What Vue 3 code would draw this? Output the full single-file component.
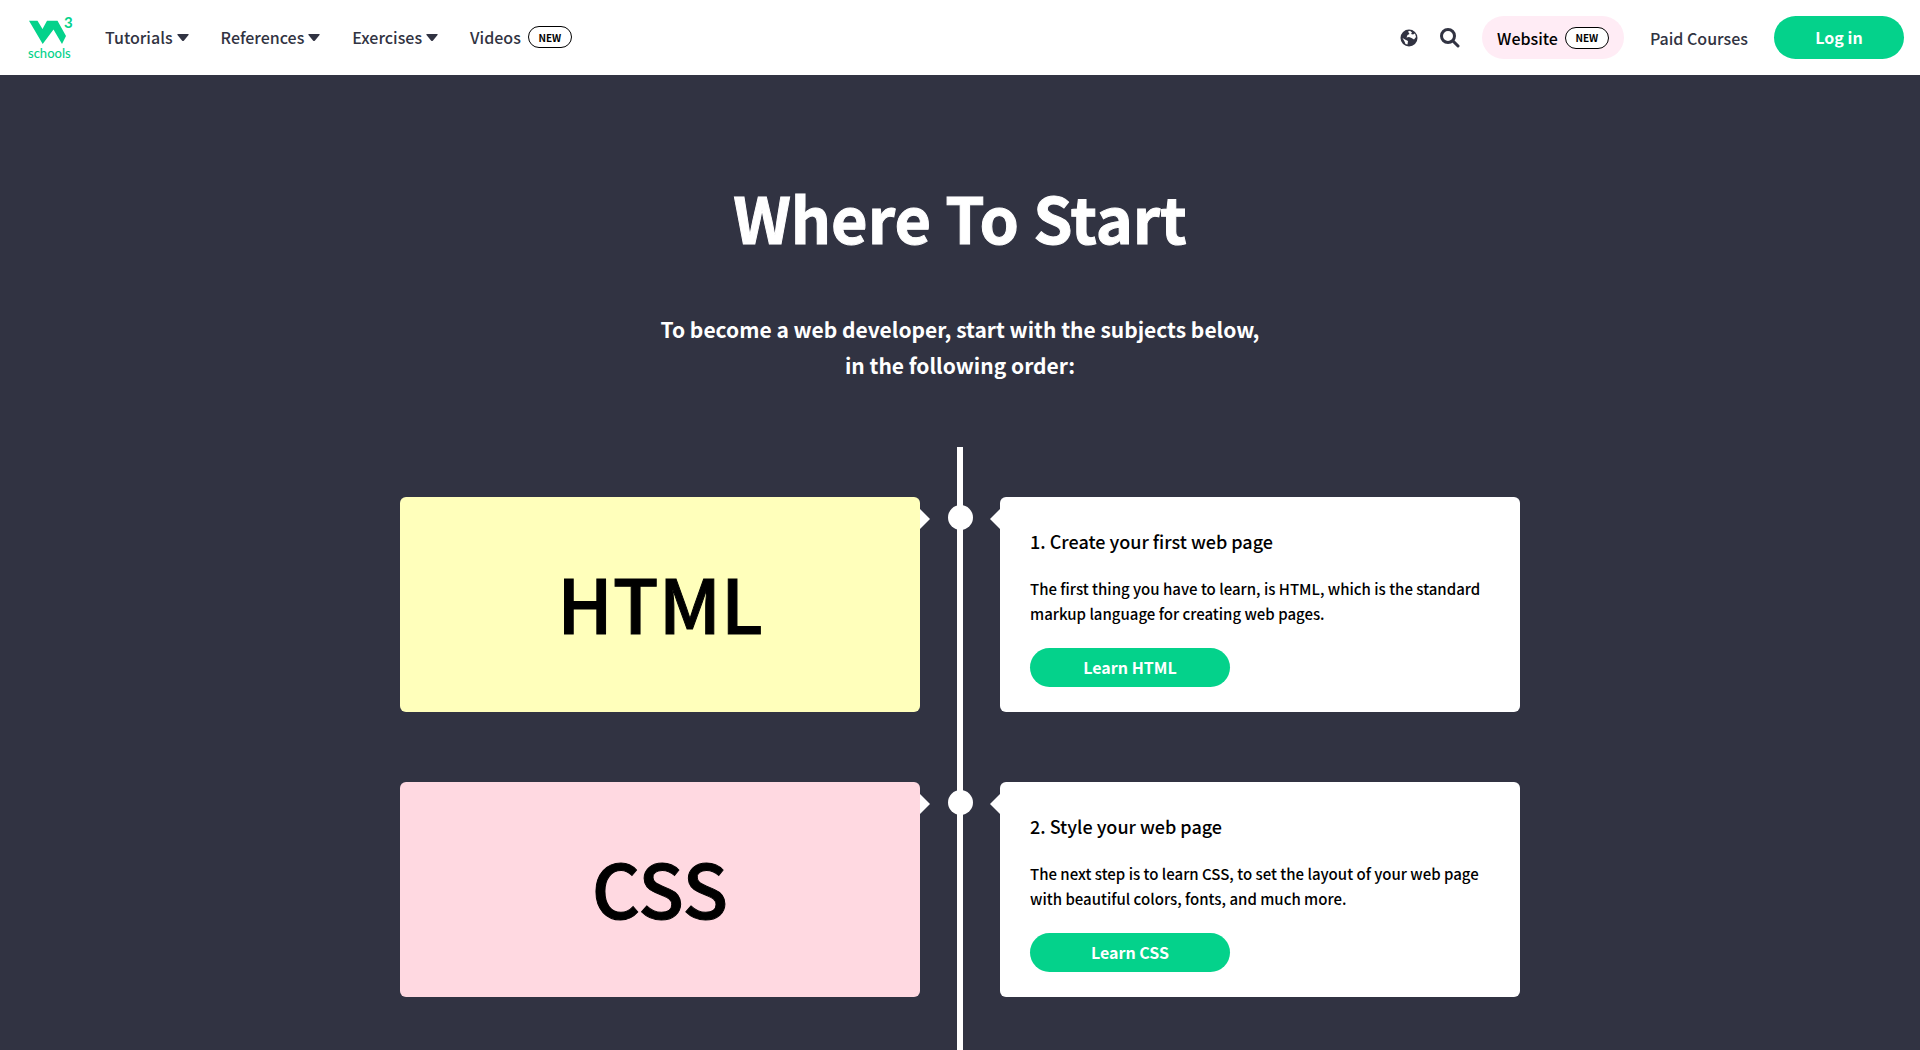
<script setup>
const menus = ['Tutorials', 'References', 'Exercises'];

const steps = [
    {
        name: 'HTML',
        theme: 'yellow',
        title: '1. Create your first web page',
        text: 'The first thing you have to learn, is HTML, which is the standard markup language for creating web pages.',
    },
    {
        name: 'CSS',
        theme: 'pink',
        title: '2. Style your web page',
        text: 'The next step is to learn CSS, to set the layout of your web page with beautiful colors, fonts, and much more.',
    },
];
</script>

<template>
  <div class="page">
    <header class="topbar">
      <a href="#" class="logo" aria-label="W3Schools">
        <svg width="48" height="52" viewBox="0 -4 48 52">
          <path d="M1 4.700H9.500L14.500 13L19 4.700H29.500L38 20L34 28L25.500 13.500L14.700 28Z" fill="#04d28b" />
          <text x="36" y="12" class="logo-three">3</text>
          <text x="0" y="42" class="logo-name">schools</text>
        </svg>
      </a>
      <nav class="menu">
        <button v-for="menu in menus" :key="menu" type="button" class="menu-item">
          {{ menu }}
          <svg width="12" height="7" viewBox="0 0 12 7"><path d="M1 0H11Q12.300 0 11.500 1L7 6.400Q6 7.400 5 6.400L.5 1Q-.3 0 1 0Z" /></svg>
        </button>
        <a href="#" class="menu-item">Videos <span class="badge">NEW</span></a>
      </nav>
      <div class="actions">
        <button type="button" class="icon-button" aria-label="Translate">
          <svg width="18" height="18" viewBox="0 0 18 18">
            <circle cx="9" cy="9" r="8.500" />
            <path d="M8 2.500L10 1.800L12 3.500L11 5L13 5.500L15 4.500L16 8L14 10.500L11.500 9L9 8L6.500 8.500L7.500 6L9.500 5Z" fill="#fff" />
            <path d="M2.500 9L5 10.500L8 12L7.500 15.500L5.500 15L4.500 12.500Z" fill="#fff" />
          </svg>
        </button>
        <button type="button" class="icon-button" aria-label="Search">
          <svg width="20" height="20" viewBox="0 0 20 20">
            <circle cx="8" cy="8" r="6.500" fill="none" stroke="currentColor" stroke-width="3" />
            <path d="M13 13l5 5" stroke="currentColor" stroke-width="3" stroke-linecap="round" />
          </svg>
        </button>
        <a href="#" class="website">Website <span class="badge">NEW</span></a>
        <a href="#" class="courses">Paid Courses</a>
        <a href="#" class="login">Log in</a>
      </div>
    </header>

    <main>
      <h1>Where To Start</h1>
      <p class="intro">To become a web developer, start with the subjects below,<br>in the following order:</p>

      <div class="timeline">
        <section v-for="step in steps" :key="step.name" class="step">
          <div class="card subject" :class="step.theme">{{ step.name }}</div>
          <div class="card info">
            <h2>{{ step.title }}</h2>
            <p>{{ step.text }}</p>
            <a href="#" class="learn">Learn {{ step.name }}</a>
          </div>
        </section>
      </div>
    </main>
  </div>
</template>

<style>
body {
    background: #313342;
}
</style>

<style scoped>
* {
    box-sizing: border-box;
}

.page {
    display: flex;
    flex-direction: column;
    min-height: 100vh;
    font-family: "Noto Sans CJK SC", "Noto Sans", sans-serif;
    font-size: 16px;
    color: #000;
}

a {
    color: inherit;
    text-decoration: none;
}

button {
    padding: 0;
    border: none;
    background: none;
    font: inherit;
    color: inherit;
    cursor: pointer;
}

svg {
    display: block;
    fill: currentColor;
}

.topbar {
    display: flex;
    align-items: center;
    height: 75px;
    padding: 0 16px 0 28px;
    background: #fff;
    color: #313342;
}

.logo-three {
    font-family: Lato, sans-serif;
    font-size: 15px;
    font-weight: bold;
    fill: #04d28b;
}

.logo-name {
    font-family: Lato, sans-serif;
    font-size: 13px;
    font-weight: 500;
    fill: #04d28b;
}

.menu {
    display: flex;
    gap: 32px;
    margin-left: 29px;
    padding-bottom: 1px;
    font-weight: 500;
}

.menu-item {
    display: flex;
    align-items: center;
    gap: 4px;
}

.badge {
    display: inline-flex;
    align-items: center;
    justify-content: center;
    width: 44px;
    height: 22px;
    margin-left: 3px;
    border: 1px solid #000;
    border-radius: 11px;
    background: #fff;
    color: #000;
    font-size: 10px;
    font-weight: bold;
}

.actions {
    display: flex;
    align-items: center;
    margin-left: auto;
}

.icon-button {
    margin-right: 22px;
}

.website {
    display: flex;
    align-items: center;
    gap: 4px;
    height: 43px;
    padding: 0 15px;
    border-radius: 22px;
    background: #ffecf5;
    color: #000;
    font-weight: 500;
}

.courses {
    margin: 0 26px;
    font-weight: 500;
}

.login {
    width: 130px;
    border-radius: 22px;
    background: #04d28b;
    color: #fff;
    font-weight: bold;
    line-height: 43px;
    text-align: center;
}

main {
    display: flex;
    flex: 1;
    flex-direction: column;
    color: #fff;
    text-align: center;
}

h1 {
    margin: 97px 0 0;
    font-size: 63px;
    line-height: 90px;
    -webkit-text-stroke: 1px currentColor;
}

.intro {
    margin: 49px 0 0;
    font-size: 21px;
    font-weight: bold;
    line-height: 36px;
}

.timeline {
    position: relative;
    flex: 1;
    width: 100%;
    max-width: 1120px;
    margin: 64px auto 0;
    padding-top: 50px;
}

.timeline::before {
    content: "";
    position: absolute;
    top: 0;
    bottom: 0;
    left: 50%;
    width: 6px;
    margin-left: -3px;
    background: #fff;
}

.step {
    position: relative;
    display: grid;
    grid-template-columns: 1fr 1fr;
    gap: 80px;
    margin-bottom: 70px;
}

.step:last-child {
    margin-bottom: 53px;
}

.step::before {
    content: "";
    position: absolute;
    top: 8px;
    left: 50%;
    width: 25px;
    height: 25px;
    margin-left: -12px;
    border-radius: 50%;
    background: #fff;
}

.card {
    position: relative;
    border-radius: 6px;
    color: #000;
}

.card::after {
    content: "";
    position: absolute;
    top: 12px;
    border: 10px solid transparent;
}

.subject {
    display: flex;
    align-items: center;
    justify-content: center;
    padding-bottom: 6px;
    font-size: 75px;
    font-weight: 500;
    line-height: 100px;
    -webkit-text-stroke: 1px currentColor;
}

.subject::after {
    left: 100%;
    border-right-width: 0;
    border-left-color: #fff;
}

.info {
    padding: 29px 30px 25px;
    background: #fff;
    text-align: left;
}

.info::after {
    right: 100%;
    border-left-width: 0;
    border-right-color: #fff;
}

.yellow {
    background: #ffffbb;
}

.pink {
    background: #ffd9e1;
}

.info h2 {
    margin: 0 0 20px;
    font-size: 18px;
    font-weight: 500;
    line-height: 30px;
}

.info p {
    margin: 0 0 22px;
    font-size: 15px;
    font-weight: 500;
    line-height: 25px;
}

.learn {
    display: block;
    width: 200px;
    border-radius: 20px;
    background: #04d28b;
    color: #fff;
    font-weight: bold;
    line-height: 39px;
    text-align: center;
}
</style>
